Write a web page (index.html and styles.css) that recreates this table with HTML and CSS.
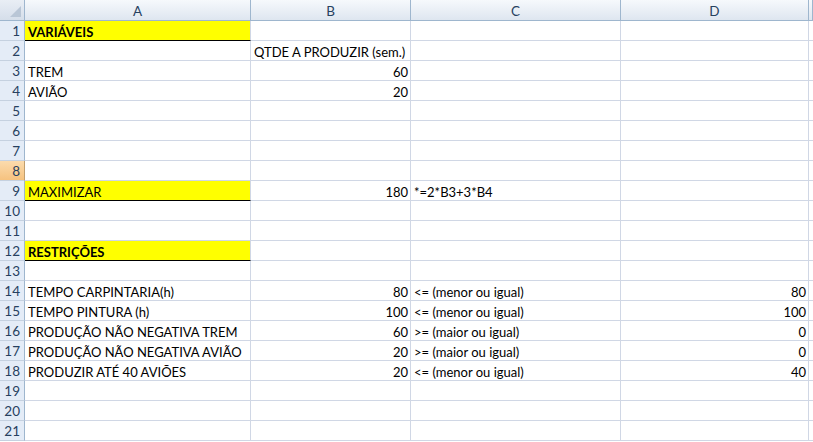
FILE: index.html
```html
<!DOCTYPE html>
<html>
<head>
<meta charset="utf-8">
<link rel="stylesheet" href="styles.css">
</head>
<body>
<div class="sheet">
  <div class="row head">
    <div class="corner"><span class="tri"></span></div>
    <div class="ch">A</div><div class="ch">B</div><div class="ch">C</div><div class="ch">D</div><div class="ch"></div>
  </div>
  <div class="row"><div class="rh">1</div><div class="c yel bold">VARIÁVEIS</div><div class="c"></div><div class="c"></div><div class="c"></div><div class="c"></div></div>
  <div class="row"><div class="rh">2</div><div class="c"></div><div class="c">QTDE A PRODUZIR (sem.)</div><div class="c"></div><div class="c"></div><div class="c"></div></div>
  <div class="row"><div class="rh">3</div><div class="c">TREM</div><div class="c num">60</div><div class="c"></div><div class="c"></div><div class="c"></div></div>
  <div class="row"><div class="rh">4</div><div class="c">AVIÃO</div><div class="c num">20</div><div class="c"></div><div class="c"></div><div class="c"></div></div>
  <div class="row"><div class="rh">5</div><div class="c"></div><div class="c"></div><div class="c"></div><div class="c"></div><div class="c"></div></div>
  <div class="row"><div class="rh">6</div><div class="c"></div><div class="c"></div><div class="c"></div><div class="c"></div><div class="c"></div></div>
  <div class="row"><div class="rh">7</div><div class="c"></div><div class="c"></div><div class="c"></div><div class="c"></div><div class="c"></div></div>
  <div class="row"><div class="rh sel">8</div><div class="c"></div><div class="c"></div><div class="c"></div><div class="c"></div><div class="c"></div></div>
  <div class="row"><div class="rh">9</div><div class="c yel">MAXIMIZAR</div><div class="c num">180</div><div class="c">*=2*B3+3*B4</div><div class="c"></div><div class="c"></div></div>
  <div class="row"><div class="rh">10</div><div class="c"></div><div class="c"></div><div class="c"></div><div class="c"></div><div class="c"></div></div>
  <div class="row"><div class="rh">11</div><div class="c"></div><div class="c"></div><div class="c"></div><div class="c"></div><div class="c"></div></div>
  <div class="row"><div class="rh">12</div><div class="c yel bold">RESTRIÇÕES</div><div class="c"></div><div class="c"></div><div class="c"></div><div class="c"></div></div>
  <div class="row"><div class="rh">13</div><div class="c"></div><div class="c"></div><div class="c"></div><div class="c"></div><div class="c"></div></div>
  <div class="row"><div class="rh">14</div><div class="c">TEMPO CARPINTARIA(h)</div><div class="c num">80</div><div class="c">&lt;= (menor ou igual)</div><div class="c num">80</div><div class="c"></div></div>
  <div class="row"><div class="rh">15</div><div class="c">TEMPO PINTURA (h)</div><div class="c num">100</div><div class="c">&lt;= (menor ou igual)</div><div class="c num">100</div><div class="c"></div></div>
  <div class="row"><div class="rh">16</div><div class="c">PRODUÇÃO NÃO NEGATIVA TREM</div><div class="c num">60</div><div class="c">&gt;= (maior ou igual)</div><div class="c num">0</div><div class="c"></div></div>
  <div class="row"><div class="rh">17</div><div class="c">PRODUÇÃO NÃO NEGATIVA AVIÃO</div><div class="c num">20</div><div class="c">&gt;= (maior ou igual)</div><div class="c num">0</div><div class="c"></div></div>
  <div class="row"><div class="rh">18</div><div class="c">PRODUZIR ATÉ 40 AVIÕES</div><div class="c num">20</div><div class="c">&lt;= (menor ou igual)</div><div class="c num">40</div><div class="c"></div></div>
  <div class="row"><div class="rh">19</div><div class="c"></div><div class="c"></div><div class="c"></div><div class="c"></div><div class="c"></div></div>
  <div class="row"><div class="rh">20</div><div class="c"></div><div class="c"></div><div class="c"></div><div class="c"></div><div class="c"></div></div>
  <div class="row"><div class="rh">21</div><div class="c"></div><div class="c"></div><div class="c"></div><div class="c"></div><div class="c"></div></div>
</div>
</body>
</html>
```
FILE: styles.css
```css
html, body {
  margin: 0;
  padding: 0;
  background: #ffffff;
}
.sheet {
  width: 813px;
  height: 442px;
  overflow: hidden;
  font-family: Lato, "Open Sans", sans-serif;
  font-size: 13px;
  color: #000;
}
.row {
  display: grid;
  grid-template-columns: 25px 226px 160px 210px 188px 1fr;
  height: 20px;
}
.row.head {
  height: 21px;
}
.corner, .ch, .rh {
  box-sizing: border-box;
  background: linear-gradient(#f6f9fc, #dee6f0);
  border-right: 1px solid #9eb6ce;
  border-bottom: 1px solid #9eb6ce;
  color: #27415f;
  font-family: Lato, "Open Sans", sans-serif;
  font-size: 13.5px;
  display: flex;
  align-items: center;
  justify-content: center;
}
.ch {
  padding-top: 1px;
}
.corner {
  position: relative;
  background: linear-gradient(#e9eef5, #d5deea);
}
.tri {
  position: absolute;
  right: 3px;
  bottom: 3px;
  width: 0;
  height: 0;
  border-left: 11px solid transparent;
  border-bottom: 11px solid #b9c6d6;
}
.rh {
  background: #e4ecf7;
  border-bottom: 1px solid #c5d1e0;
  justify-content: flex-end;
  padding-right: 4px;
  padding-top: 1px;
}
.rh.sel {
  background: linear-gradient(#fbdbad, #f6c27f);
  border-right-color: #c09e6e;
}
.c {
  box-sizing: border-box;
  border-right: 1px solid #d0d7e5;
  border-bottom: 1px solid #d0d7e5;
  padding: 2px 2px 0 3px;
  display: flex;
  align-items: center;
  white-space: nowrap;
  overflow: visible;
}
.num {
  justify-content: flex-end;
}
.yel {
  background: #ffff00;
  border-bottom: 1px solid #000;
}
.bold {
  font-weight: bold;
}
```
